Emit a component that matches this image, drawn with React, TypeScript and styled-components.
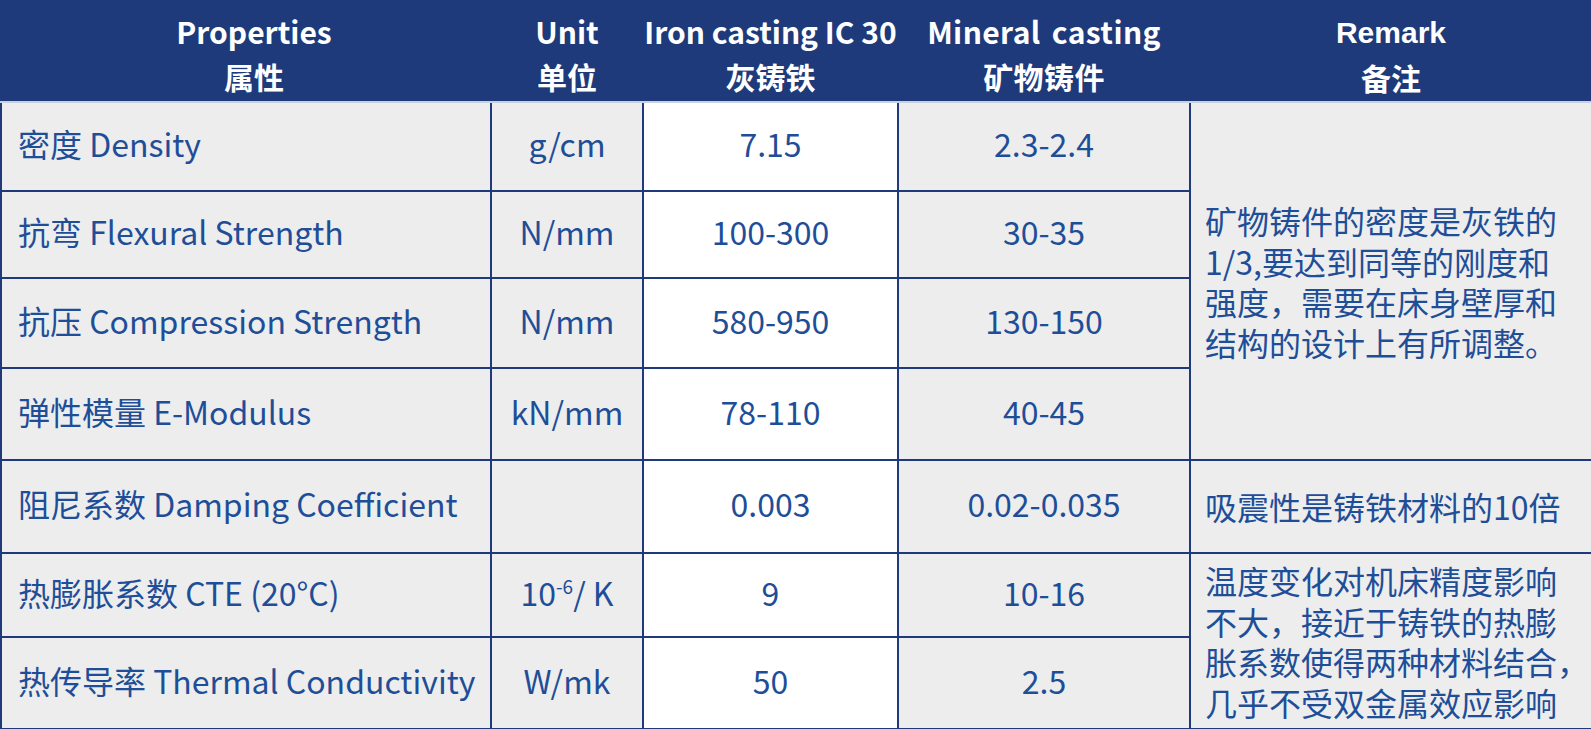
import styled, { createGlobalStyle } from 'styled-components';

const NAVY = '#1e3a7a';
const TEXT = '#1f4e98';

const GlobalStyle = createGlobalStyle`
  html, body {
    margin: 0;
    padding: 0;
    background: #ffffff;
  }
  body {
    font-family: "Noto Sans CJK SC", "Noto Sans", sans-serif;
  }
`;

const Table = styled.table`
  width: 1591px;
  table-layout: fixed;
  border-collapse: collapse;
  border: 2px solid ${NAVY};
`;

const HeadRow = styled.tr`
  height: 101px;
  background: ${NAVY};
`;

const Th = styled.th<{ $indent?: number; $spread?: boolean }>`
  color: #ffffff;
  font-size: 30px;
  font-weight: 700;
  line-height: 45px;
  text-align: center;
  vertical-align: middle;
  padding: 4px 0 0 ${({ $indent }) => $indent || 0}px;
  word-spacing: ${({ $spread }) => ($spread ? '4px' : '0')};
  letter-spacing: ${({ $spread }) => ($spread ? '0.4px' : '0')};
  white-space: nowrap;
  border: 2px solid ${NAVY};
  border-bottom-color: #c9d0de;
`;

const Arial = styled.span`
  font-family: "Liberation Sans", Arial, sans-serif;
  font-size: 30px;
`;

const BodyRow = styled.tr<{ $height: number }>`
  height: ${({ $height }) => $height}px;
`;

const Td = styled.td<{ $align?: 'left' | 'center'; $white?: boolean }>`
  color: ${TEXT};
  font-size: 32px;
  font-weight: 400;
  text-align: ${({ $align }) => $align || 'center'};
  vertical-align: middle;
  padding: 0 ${({ $align }) => ($align === 'left' ? '16px' : '0')} 7px;
  background: ${({ $white }) => ($white ? '#ffffff' : '#ededed')};
  border: 2px solid ${NAVY};
  white-space: nowrap;
`;

const RemarkCell = styled.td`
  color: ${TEXT};
  font-size: 32px;
  line-height: 40.5px;
  text-align: left;
  vertical-align: middle;
  padding: 0 0 0 14px;
  background: #ededed;
  border: 2px solid ${NAVY};
  white-space: nowrap;
`;

const Sup = styled.sup`
  font-size: 19px;
  line-height: 0;
  vertical-align: 12px;
`;

interface Row {
  name: string;
  unit: React.ReactNode;
  iron: string;
  mineral: string;
  height: number;
}

const rows: Row[] = [
  { name: '密度 Density', unit: 'g/cm', iron: '7.15', mineral: '2.3-2.4', height: 89 },
  { name: '抗弯 Flexural Strength', unit: 'N/mm', iron: '100-300', mineral: '30-35', height: 87 },
  { name: '抗压 Compression Strength', unit: 'N/mm', iron: '580-950', mineral: '130-150', height: 90 },
  { name: '弹性模量 E-Modulus', unit: 'kN/mm', iron: '78-110', mineral: '40-45', height: 92 },
  { name: '阻尼系数 Damping Coefficient', unit: '', iron: '0.003', mineral: '0.02-0.035', height: 93 },
  {
    name: '热膨胀系数 CTE (20°C)',
    unit: (
      <>
        10<Sup>-6</Sup>/ K
      </>
    ),
    iron: '9',
    mineral: '10-16',
    height: 84,
  },
  { name: '热传导率 Thermal Conductivity', unit: 'W/mk', iron: '50', mineral: '2.5', height: 92 },
];

// remarks span several rows, keyed by the row they start on
const remarks: Record<number, { span: number; lines: string[] }> = {
  0: {
    span: 4,
    lines: ['矿物铸件的密度是灰铁的', '1/3,要达到同等的刚度和', '强度，需要在床身壁厚和', '结构的设计上有所调整。'],
  },
  4: { span: 1, lines: ['吸震性是铸铁材料的10倍'] },
  5: {
    span: 2,
    lines: ['温度变化对机床精度影响', '不大，接近于铸铁的热膨', '胀系数使得两种材料结合，', '几乎不受双金属效应影响'],
  },
};

const App = () => {
  return (
    <>
      <GlobalStyle />
      <Table>
        <colgroup>
          <col style={{ width: 490 }} />
          <col style={{ width: 152 }} />
          <col style={{ width: 255 }} />
          <col style={{ width: 292 }} />
          <col style={{ width: 402 }} />
        </colgroup>
        <thead>
          <HeadRow>
            <Th $indent={16}>
              Properties
              <br />
              属性
            </Th>
            <Th>
              Unit
              <br />
              单位
            </Th>
            <Th>
              Iron casting IC 30
              <br />
              灰铸铁
            </Th>
            <Th $spread>
              Mineral casting
              <br />
              矿物铸件
            </Th>
            <Th>
              <Arial>Remark</Arial>
              <br />
              备注
            </Th>
          </HeadRow>
        </thead>
        <tbody>
          {rows.map((row, i) => (
            <BodyRow key={row.name} $height={row.height}>
              <Td $align="left">{row.name}</Td>
              <Td>{row.unit}</Td>
              <Td $white>{row.iron}</Td>
              <Td>{row.mineral}</Td>
              {remarks[i] && (
                <RemarkCell rowSpan={remarks[i].span}>
                  {remarks[i].lines.map((line) => (
                    <div key={line}>{line}</div>
                  ))}
                </RemarkCell>
              )}
            </BodyRow>
          ))}
        </tbody>
      </Table>
    </>
  );
};

export default App;
